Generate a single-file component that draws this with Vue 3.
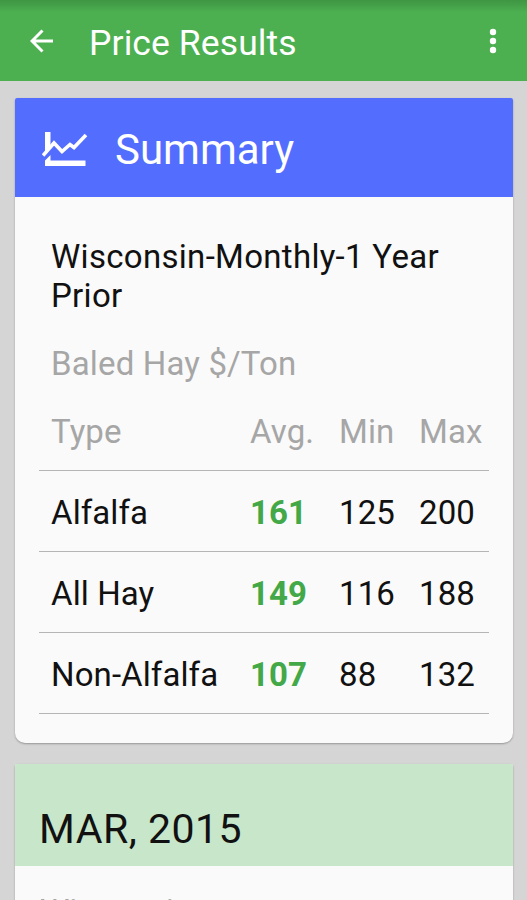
<template>
  <div class="screen">
    <header class="toolbar">
      <svg class="back-icon" viewBox="0 0 24 24" width="24" height="24">
        <path d="M23 12H2M12.500 1.500L2 12L12.500 22.500" />
      </svg>
      <h1>Price Results</h1>
      <svg class="menu-icon" viewBox="0 0 8 26" width="8" height="26">
        <circle cx="4" cy="4" r="3.2" />
        <circle cx="4" cy="13" r="3.2" />
        <circle cx="4" cy="22" r="3.2" />
      </svg>
    </header>

    <main>
      <section class="card summary">
        <div class="card-header">
          <svg class="chart-icon" viewBox="0 0 46 36" width="46" height="36">
            <path class="axis" d="M3 1h5.500v16L3 23zM3 29.500L8.500 24v5.500h35V35H3z" />
            <path class="trend" d="M1 24.500L12 12L20 20.500L28 13.500L32 16.500L44 4" />
          </svg>
          <h2>Summary</h2>
        </div>
        <div class="card-body">
          <p class="query">Wisconsin-Monthly-1 Year Prior</p>
          <p class="unit">Baled Hay $/Ton</p>
          <div class="row head">
            <span>Type</span>
            <span>Avg.</span>
            <span>Min</span>
            <span>Max</span>
          </div>
          <div v-for="row in rows" :key="row.type" class="row">
            <span>{{ row.type }}</span>
            <span class="avg">{{ row.avg }}</span>
            <span>{{ row.min }}</span>
            <span>{{ row.max }}</span>
          </div>
        </div>
      </section>

      <section class="card month">
        <div class="month-header">MAR, 2015</div>
        <p class="month-text">Wisconsin</p>
      </section>
    </main>
  </div>
</template>

<script setup>
const rows = [
  { type: "Alfalfa", avg: 161, min: 125, max: 200 },
  { type: "All Hay", avg: 149, min: 116, max: 188 },
  { type: "Non-Alfalfa", avg: 107, min: 88, max: 132 },
];
</script>

<style>
body {
  background: #d5d5d5;
}
</style>

<style scoped>
.screen {
  height: 900px;
  overflow: hidden;
  background: #d5d5d5;
  font-family: Roboto, sans-serif;
  font-size: 33px;
  color: #111;
}

h1,
h2,
p {
  margin: 0;
  font-weight: 400;
}

.toolbar {
  display: flex;
  align-items: center;
  box-sizing: border-box;
  height: 81px;
  padding: 1px 30px 0 30px;
  background: linear-gradient(#3f9543, #4caf50 12px);
  color: #fff;
}

.back-icon {
  fill: none;
  stroke: #fff;
  stroke-width: 3;
}

.toolbar h1 {
  flex: 1;
  margin-left: 35px;
  padding-top: 4px;
  font-size: 35.5px;
  letter-spacing: 0.1px;
}

.menu-icon {
  fill: #fff;
}

main {
  padding: 17px 14px 0 15px;
}

.card {
  overflow: hidden;
  border-radius: 2px 2px 10px 10px;
  background: #fafafa;
  box-shadow: 0 1px 2px rgba(0, 0, 0, 0.3);
}

.summary {
  height: 645px;
}

.card-header {
  display: flex;
  align-items: center;
  height: 99px;
  padding-left: 27px;
  background: #536dfe;
  color: #fff;
}

.chart-icon {
  margin-top: 3px;
}

.card-header h2 {
  margin-left: 27px;
  padding-top: 4px;
  font-size: 42px;
}

.chart-icon .axis {
  fill: #fff;
}

.chart-icon .trend {
  fill: none;
  stroke: #fff;
  stroke-width: 3.6;
}

.card-body {
  padding: 40px 24px 0;
}

.query,
.unit {
  padding: 0 12px;
  line-height: 39px;
  letter-spacing: 0.3px;
}

.unit {
  margin-top: 29px;
  color: #a6a6a6;
  letter-spacing: 0.15px;
}

.row {
  display: grid;
  grid-template-columns: 199px 89px 80px 1fr;
  box-sizing: border-box;
  height: 81px;
  padding-left: 12px;
  border-bottom: 1px solid #b5b5b5;
  line-height: 83px;
  letter-spacing: 0.1px;
}

.head {
  height: 88px;
  line-height: 98px;
  color: #a6a6a6;
}

.avg {
  color: #43a847;
  font-weight: 700;
}

.month {
  height: 200px;
  margin-top: 21px;
}

.month-header {
  height: 102px;
  padding-left: 24px;
  background: #c8e6c9;
  font-size: 41px;
  line-height: 130px;
  letter-spacing: 0.5px;
}

.month-text {
  padding: 26px 25px 0;
  color: #a6a6a6;
  line-height: 39px;
}
</style>
